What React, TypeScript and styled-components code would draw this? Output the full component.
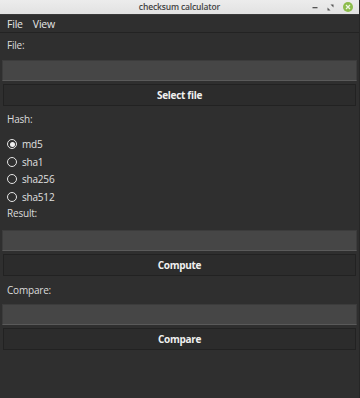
import React from "react";
import styled, { createGlobalStyle } from "styled-components";

const Global = createGlobalStyle`
  html, body { margin: 0; padding: 0; background: #2f2f2f; }
  body { width: 360px; height: 398px; overflow: hidden; font-family: "Open Sans", "Noto Sans", sans-serif; }
`;

const Window = styled.div`
  width: 360px;
  height: 398px;
  display: flex;
  flex-direction: column;
  background: #2f2f2f;
  box-sizing: border-box;
  border-right: 1px solid #262626;
`;

const TitleBar = styled.div`
  height: 14px;
  background: linear-gradient(#ececec, #e2e2e2);
  border-bottom: 1px solid #3a3a3a;
  display: flex;
  align-items: center;
  justify-content: center;
  position: relative;
  flex-shrink: 0;
`;

const Title = styled.span`
  font-size: 8.5px;
  color: #444;
  font-weight: 600;
  letter-spacing: -0.15px;
  line-height: 14px;
`;

const Controls = styled.div`
  position: absolute;
  right: 6px;
  top: 0;
  height: 14px;
  display: flex;
  align-items: center;
  gap: 9px;
`;

const Close = styled.div`
  width: 10px;
  height: 10px;
  border-radius: 50%;
  background: #8cbc4c;
  display: flex;
  align-items: center;
  justify-content: center;
`;

const MenuBar = styled.div`
  height: 17px;
  display: flex;
  align-items: center;
  gap: 10px;
  padding: 0 7px;
  background: #2f2f2f;
  border-bottom: 1px solid #232323;
  flex-shrink: 0;
`;

const MenuItem = styled.span`
  color: #e6e6e6;
  font-size: 10.5px;
  letter-spacing: -0.2px;
`;

const Body = styled.div`
  display: flex;
  flex-direction: column;
  padding: 0 3px;
`;

const Label = styled.div<{ $top: number; $bottom: number }>`
  color: #dcdcdc;
  font-size: 10px;
  letter-spacing: -0.2px;
  padding-left: 4px;
  margin-top: ${(p) => p.$top}px;
  margin-bottom: ${(p) => p.$bottom}px;
  height: 15px;
  line-height: 15px;
`;

const Field = styled.div`
  height: 19px;
  margin: 0 -1px;
  background: #464646;
  border: 1px solid #3c3c3c;
  border-bottom: 1px solid #5a5a5a;
`;

const Button = styled.div`
  height: 20px;
  margin-top: 3px;
  background: #2c2c2c;
  border: 1px solid #222;
  display: flex;
  align-items: center;
  justify-content: center;
  color: #f0f0f0;
  font-weight: 700;
  font-size: 10px;
  letter-spacing: -0.3px;
`;

const RadioList = styled.div`
  display: flex;
  flex-direction: column;
  gap: 3px;
  padding-left: 4px;
  margin-top: 3px;
`;

const RadioRow = styled.div`
  display: flex;
  align-items: center;
  gap: 5px;
  height: 14.5px;
  color: #e0e0e0;
  font-size: 10px;
  letter-spacing: -0.2px;
`;

const RadioCircle = styled.span<{ $checked: boolean }>`
  width: 10px;
  height: 10px;
  border-radius: 50%;
  border: 1.3px solid #e6e6e6;
  box-sizing: border-box;
  display: flex;
  align-items: center;
  justify-content: center;
  &::after {
    content: "";
    width: 5px;
    height: 5px;
    border-radius: 50%;
    background: ${(p) => (p.$checked ? "#f0f0f0" : "transparent")};
  }
`;

export default function App() {
  const hashes = ["md5", "sha1", "sha256", "sha512"];
  return (
    <>
      <Global />
      <Window>
        <TitleBar>
          <Title>checksum calculator</Title>
          <Controls>
            <svg width="6" height="6" viewBox="0 0 6 6">
              <rect x="0.5" y="3" width="5" height="1.3" fill="#555" />
            </svg>
            <svg width="7" height="7" viewBox="0 0 7 7">
              <path d="M3.5 0.5 H6.5 V3.5 Z" fill="#555" />
              <path d="M0.5 3.5 V6.5 H3.5 Z" fill="#555" />
            </svg>
            <Close>
              <svg width="6" height="6" viewBox="0 0 6 6">
                <path d="M1 1 L5 5 M5 1 L1 5" stroke="#eef5e4" strokeWidth="1.3" />
              </svg>
            </Close>
          </Controls>
        </TitleBar>
        <MenuBar>
          <MenuItem>File</MenuItem>
          <MenuItem>View</MenuItem>
        </MenuBar>
        <Body>
          <Label $top={5} $bottom={7}>File:</Label>
          <Field />
          <Button>Select file</Button>
          <Label $top={6} $bottom={7}>Hash:</Label>
          <RadioList>
            {hashes.map((h, i) => (
              <RadioRow key={h}>
                <RadioCircle $checked={i === 0} />
                {h}
              </RadioRow>
            ))}
          </RadioList>
          <Label $top={2} $bottom={9}>Result:</Label>
          <Field />
          <Button>Compute</Button>
          <Label $top={7} $bottom={6}>Compare:</Label>
          <Field />
          <Button>Compare</Button>
        </Body>
      </Window>
    </>
  );
}
